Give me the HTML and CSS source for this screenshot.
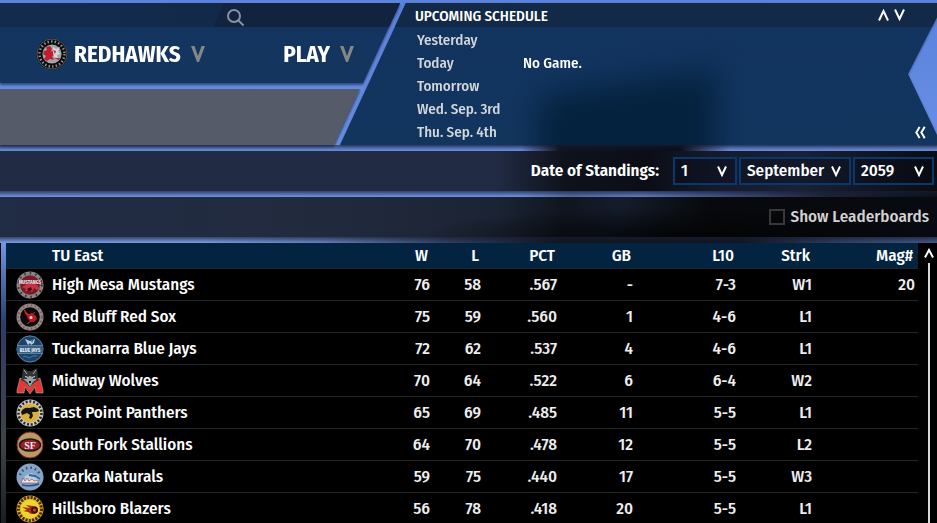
FILE: index.html
```html
<!DOCTYPE html>
<html lang="en">
<head>
<meta charset="utf-8">
<title>Redhawks – Standings</title>
<link rel="stylesheet" href="styles.css">
</head>
<body>
<header class="masthead">
  <div class="masthead-left">
    <nav class="nav-panel">
      <div class="nav-strip">
        <button class="search" aria-label="Search"><svg width="18" height="18" viewBox="0 0 18 18"><circle cx="7" cy="7" r="6"/><path d="M11 11l5.500 5.500"/></svg></button>
      </div>
      <div class="nav-items">
        <a class="nav-link" href="#">
          <svg class="team-logo" width="32" height="32" viewBox="0 0 32 32"><circle cx="16" cy="16" r="15.500" fill="#0c0c0e"/><circle cx="16" cy="16" r="15" fill="none" stroke="#55585b"/><circle cx="16" cy="16" r="12.500" fill="none" stroke="#96989a" stroke-width="2.400" stroke-dasharray="1.400 2.200"/><circle cx="16" cy="16" r="9.600" fill="#a3a6a9"/><path d="M10 9l4-1 2 3-1 2 3 1 1 3-3 1 2 4-4-1-3 2-3-2 2-3-3-2 1-3 3-1z" fill="#c21c31"/><path d="M17 9l3 2 4-2-2 4 2 3-3 1 1 3-4-1-1-4z" fill="#d5d7d9"/><path d="M17 12l3 1-1 3M18 20l6 0-1 2z" fill="#b92337"/></svg>
          <span>REDHAWKS</span>
          <svg class="nav-chevron" width="14" height="16" viewBox="0 0 14 16"><path d="M0 0h3.500L7 10l3.500-10H14L8 16H6z"/></svg>
        </a>
        <a class="nav-link" href="#">
          <span>PLAY</span>
          <svg class="nav-chevron" width="14" height="16" viewBox="0 0 14 16"><path d="M0 0h3.500L7 10l3.500-10H14L8 16H6z"/></svg>
        </a>
      </div>
    </nav>
    <div class="sub-panel"></div>
  </div>
  <section class="schedule">
    <div class="schedule-body">
      <div class="schedule-head">
        <h2>UPCOMING SCHEDULE</h2>
        <div class="schedule-nav">
          <button aria-label="Previous"><svg width="11" height="12" viewBox="0 0 11 12"><path d="M1 11.500L5.500 2L10 11.500"/></svg></button>
          <button aria-label="Next"><svg width="11" height="12" viewBox="0 0 11 12"><path d="M1 .5L5.500 10L10 .5"/></svg></button>
        </div>
      </div>
      <dl class="days">
        <dt>Yesterday</dt><dd></dd>
        <dt>Today</dt><dd>No Game.</dd>
        <dt>Tomorrow</dt><dd></dd>
        <dt>Wed. Sep. 3rd</dt><dd></dd>
        <dt>Thu. Sep. 4th</dt><dd></dd>
      </dl>
      <button class="collapse" aria-label="Collapse"><svg width="11" height="13" viewBox="0 0 11 13"><path d="M4.500 .8Q3 4 1.300 6.500Q3 9 4.500 12.200M9.700 .8Q8 4 6.300 6.500Q8 9 9.700 12.200"/></svg></button>
    </div>
  </section>
</header>
<main>
  <form class="bar bar-date">
    <span class="bar-label">Date of Standings:</span>
    <div class="selects">
      <span class="pick pick-day"><select aria-label="Day"><option>1</option></select><svg width="10" height="11" viewBox="0 0 10 11"><path d="M1 .5L5 9L9 .5"/></svg></span>
      <span class="pick pick-month"><select aria-label="Month"><option>September</option></select><svg width="10" height="11" viewBox="0 0 10 11"><path d="M1 .5L5 9L9 .5"/></svg></span>
      <span class="pick pick-year"><select aria-label="Year"><option>2059</option></select><svg width="10" height="11" viewBox="0 0 10 11"><path d="M1 .5L5 9L9 .5"/></svg></span>
    </div>
  </form>
  <div class="bar bar-options">
    <label class="check"><input type="checkbox"><span>Show Leaderboards</span></label>
  </div>
  <div class="standings">
    <table>
      <colgroup><col class="c-logo"><col><col class="c-w"><col class="c-l"><col class="c-mid"><col class="c-mid"><col class="c-wide"><col class="c-mid"><col class="c-mag"></colgroup>
      <thead><tr><th></th><th class="name">TU East</th><th>W</th><th>L</th><th>PCT</th><th>GB</th><th>L10</th><th>Strk</th><th>Mag#</th></tr></thead>
      <tbody>
        <tr><td><svg class="team-logo" width="28" height="28" viewBox="0 0 28 28"><circle cx="14" cy="14" r="13.500" fill="#858789"/><circle cx="14" cy="14" r="11.800" fill="none" stroke="#43262b" stroke-width="2" stroke-dasharray="1.500 4"/><circle cx="14" cy="14" r="9.800" fill="#7d1926"/><path d="M6 16l5-3 5-1 5 2 3 4-3 1-3-2-2 4-3-2-4 2 1-3z" fill="#c63442"/><path d="M11 18l4-2 1 3-3 1z" fill="#361116"/><path d="M2 9h24v3.500H2z" fill="#7d1926"/><text x="14" y="13" text-anchor="middle" class="logo-text">MUSTANGS</text></svg></td><td class="name">High Mesa Mustangs</td><td>76</td><td>58</td><td>.567</td><td>-</td><td>7-3</td><td>W1</td><td>20</td></tr>
        <tr><td><svg class="team-logo" width="28" height="28" viewBox="0 0 28 28"><circle cx="14" cy="14" r="13.500" fill="#8b8d8e"/><circle cx="14" cy="14" r="11.800" fill="none" stroke="#a3494b" stroke-width="2" stroke-dasharray="1.500 2.500"/><circle cx="14" cy="14" r="9.800" fill="#0b090a"/><path d="M8 6l3 4 2 1 3-1 4 3 1 3-3 3-3 0-3-3-1-3-2-2z" fill="#bd1b22"/><path d="M8 7l4 5M11 21l4-3M17 11l2-2" stroke="#d3331f"/><circle cx="15" cy="14.500" r="1.500" fill="#e8d6cf"/></svg></td><td class="name">Red Bluff Red Sox</td><td>75</td><td>59</td><td>.560</td><td>1</td><td>4-6</td><td>L1</td><td></td></tr>
        <tr><td><svg class="team-logo" width="28" height="28" viewBox="0 0 28 28"><circle cx="14" cy="14" r="13.500" fill="#1c4268"/><circle cx="14" cy="14" r="13" fill="none" stroke="#5c7c99"/><path d="M9 4l5 2 5-2-1 4-3 2-1-2-2 2z" fill="#b8ccd9"/><path d="M15 5l3-1-2 4z" fill="#2d6ca8"/><path d="M1 10.500h26v8H1z" fill="#346185"/><path d="M1 10.500h26M1 18.500h26" stroke="#82a0b6" stroke-width=".6"/><text x="14" y="16.800" text-anchor="middle" class="logo-text">BLUE JAYS</text><path d="M7 22q2-2 4 0t4 0 6-1" fill="none" stroke="#3a83b9"/></svg></td><td class="name">Tuckanarra Blue Jays</td><td>72</td><td>62</td><td>.537</td><td>4</td><td>4-6</td><td>L1</td><td></td></tr>
        <tr><td><svg class="team-logo" width="28" height="28" viewBox="0 0 28 28"><path d="M1 26V23L4 11l4 1 6 9 6-9 4-1 3 12v3h-7l-1-6-5 7-5-7-1 6z" fill="#e13a35" stroke="#bbb" stroke-width=".5"/><path d="M6 11L7 1l5 3h4l5-3 1 10 1 2-4 2-5 5-5-5-4-2z" fill="#303436"/><path d="M8 3l3 4M20 3l-3 4" stroke="#aaa"/><path d="M7 12l4 0 2-3h2l2 3 4 0-4 3-3 5-3-5z" fill="#9ba1a3"/><path d="M9 9.500l3 1M19 9.500l-3 1" stroke="#ddd"/><path d="M13 14h2v2h-2z" fill="#111"/></svg></td><td class="name">Midway Wolves</td><td>70</td><td>64</td><td>.522</td><td>6</td><td>6-4</td><td>W2</td><td></td></tr>
        <tr><td><svg class="team-logo" width="28" height="28" viewBox="0 0 28 28"><circle cx="14" cy="14" r="13.500" fill="#c8c9c4"/><circle cx="14" cy="14" r="11.500" fill="none" stroke="#29292b" stroke-width="2.600" stroke-dasharray="2 1.800"/><circle cx="14" cy="14" r="9.500" fill="#dbb13e"/><path d="M5 13q3-5 8-4l5-1 4 2 1 2-3 1-4 0 1 4-2 3-2-1 1-3-3-2-5 2z" fill="#131416"/></svg></td><td class="name">East Point Panthers</td><td>65</td><td>69</td><td>.485</td><td>11</td><td>5-5</td><td>L1</td><td></td></tr>
        <tr><td><svg class="team-logo" width="28" height="28" viewBox="0 0 28 28"><circle cx="14" cy="14" r="13" fill="#b89a63" stroke="#8d2633"/><ellipse cx="14" cy="14" rx="10.500" ry="6" fill="#941e2a" stroke="#211718" stroke-width="1.500"/><text x="14" y="17.500" text-anchor="middle" class="logo-mono">SF</text></svg></td><td class="name">South Fork Stallions</td><td>64</td><td>70</td><td>.478</td><td>12</td><td>5-5</td><td>L2</td><td></td></tr>
        <tr><td><svg class="team-logo" width="28" height="28" viewBox="0 0 28 28"><circle cx="14" cy="14" r="13.500" fill="#86a5c6"/><path d="M4 12A10.500 10.500 0 0 1 24 12" fill="none" stroke="#294f7c" stroke-width="2.500" stroke-dasharray="1.500 3"/><path d="M9 13l6-3 5 2 4 3-3 4H8z" fill="#b9cde0"/><path d="M13 12l6 1 5 3" stroke="#2a63a0" stroke-width="2" fill="none"/><path d="M5 20l2-5 2 3 2-3 2 3 3-2 2 2 4-1v3z" fill="#e8e5e4" stroke="#9c5157" stroke-width=".7"/><path d="M6 22q8 2 17-1" fill="none" stroke="#285182" stroke-width="1.500"/></svg></td><td class="name">Ozarka Naturals</td><td>59</td><td>75</td><td>.440</td><td>17</td><td>5-5</td><td>W3</td><td></td></tr>
        <tr><td><svg class="team-logo" width="28" height="28" viewBox="0 0 28 28"><circle cx="14" cy="14" r="13.500" fill="#d5b927"/><circle cx="14" cy="14" r="11.500" fill="none" stroke="#5b2117" stroke-width="3" stroke-dasharray="2.200 1.200"/><circle cx="14" cy="14" r="9.500" fill="#ead52e"/><path d="M6 12l8 1-4-3 7 1 4 1 1 4-3 3h-4l-3-2-5-1 4-1z" fill="#a72a1d"/><circle cx="18.500" cy="15" r="3.500" fill="#391713"/><circle cx="18.500" cy="15" r="1.500" fill="#d3442b"/></svg></td><td class="name">Hillsboro Blazers</td><td>56</td><td>78</td><td>.418</td><td>20</td><td>5-5</td><td>L1</td><td></td></tr>
      </tbody>
    </table>
    <div class="scroll">
      <button aria-label="Scroll up"><svg width="10" height="10" viewBox="0 0 10 10"><path d="M1 9.500L5 2L9 9.500"/></svg></button>
      <div class="scroll-thumb"></div>
    </div>
  </div>
</main>
</body>
</html>
```
FILE: styles.css
```css
* { box-sizing: border-box; }
body {
  margin: 0;
  height: 100vh;
  overflow: hidden;
  display: flex;
  flex-direction: column;
  background: #000;
  color: #fff;
  font: 500 17px/20px "Fira Sans Condensed", "Fira Sans", Roboto, sans-serif;
}
button { padding: 0; border: 0; background: none; color: inherit; display: flex; }
h2, dl, dd { margin: 0; }
a { color: inherit; text-decoration: none; }
svg { display: block; flex: none; }

/* Header */
.masthead {
  display: flex;
  padding: 3px 0 6px;
  background:
    linear-gradient(rgba(20, 24, 40, .6), transparent) bottom / 100% 6px no-repeat,
    linear-gradient(90deg, transparent 520px, #10151f 560px, #0b0e16 680px, transparent 730px) bottom / 100% 8px no-repeat,
    linear-gradient(#5b82dc, #6990e4);
}
.masthead-left { flex: none; width: 400px; display: flex; flex-direction: column; gap: 6px; filter: drop-shadow(0 2px 1px rgba(25, 28, 60, .6)); }
.nav-panel { height: 80px; background: linear-gradient(#11335f, #14365e); clip-path: polygon(0 0, 100% 0, 363px 100%, 0 100%); }
.nav-strip { height: 24px; display: flex; justify-content: flex-end; background: linear-gradient(90deg, #132c4d, #112747); }
.search { width: 187px; padding: 6px 0 0 14px; background: #11233f; clip-path: polygon(11px 0, 100% 0, 100% 100%, 0 100%); }
.search svg, .schedule svg, .pick svg, .scroll svg { fill: none; stroke: #fff; stroke-width: 2; }
.search svg { stroke: #8792a2; }
.nav-items { display: flex; align-items: center; justify-content: space-between; height: 54px; padding: 0 46px 0 36px; }
.nav-link { display: flex; align-items: center; gap: 10px; font-size: 23px; font-weight: 700; line-height: 28px; }
.nav-link .team-logo { margin-right: -4px; }
.nav-chevron { fill: #858686; }
.sub-panel { height: 56px; background: #555b69; clip-path: polygon(0 0, 360px 0, 334px 100%, 0 100%); }

.schedule { flex: 1; margin-left: -60px; filter: drop-shadow(0 1px 1px rgba(25, 28, 60, .5)); }
.schedule-body {
  position: relative;
  height: 100%;
  background: linear-gradient(#11335f, #12355e);
  clip-path: polygon(66px 0, 100% 0, 100% 14px, calc(100% - 29px) 71px, 100% 132px, 100% 100%, 0 100%);
}
.schedule-body::before {
  content: "";
  position: absolute;
  left: 198px;
  top: 80px;
  width: 178px;
  height: 120px;
  background: #04213d;
  filter: blur(16px);
  transform: skewY(-8deg);
}
.schedule-head { position: relative; height: 24px; display: flex; align-items: center; justify-content: space-between; padding: 0 32px 0 75px; background: #122947; }
.schedule h2 { font-size: 15px; line-height: 20px; font-weight: 500; padding-top: 2px; }
.schedule-nav { display: flex; gap: 5px; }
.days { position: relative; display: grid; grid-template-columns: 106px 1fr; grid-auto-rows: 23px; align-items: center; padding: 1px 0 0 77px; font-size: 15px; }
.days dt { color: #d3d6da; }
.collapse { position: absolute; right: 11px; bottom: 6px; }

/* Toolbars */
main { flex: 1; min-height: 0; display: flex; flex-direction: column; }
.bar { flex: none; display: flex; align-items: center; justify-content: flex-end; height: 46px; padding-bottom: 6px; }
.bar-date {
  gap: 14px;
  padding-right: 3px;
  background:
    linear-gradient(rgba(25, 29, 48, .7), transparent) bottom / 100% 6px no-repeat,
    linear-gradient(90deg, #6f96e8 520px, #526eac 570px, #6080c8 640px, #4a63a0 690px, #1a2436 830px, #0a0f18) bottom / 100% 6px no-repeat,
    linear-gradient(90deg, #212b44 495px, #0e121b 565px, #0b0e17 650px, #141a2b 710px, #1a2136 800px, #090c13 937px);
}
.bar-label { font-weight: 600; }
.bar-options {
  padding-right: 8px;
  background:
    linear-gradient(rgba(25, 29, 48, .7), transparent) bottom / 100% 6px no-repeat,
    linear-gradient(90deg, #7ba0ec 200px, #6783be 320px, #2f3f5e 450px, #0f141c 560px, #10151f 740px, #33446a 850px, #435888) bottom / 100% 6px no-repeat,
    radial-gradient(260px 30px at 680px 40px, rgba(2, 3, 4, .9), transparent),
    linear-gradient(90deg, #212c45, #222b3e 300px, #1b2334 500px, #10151f 565px, #151c2c 620px, #08090c 710px, #070a10 937px);
}
.selects { display: flex; gap: 2px; }
.pick { display: grid; align-items: center; border: 2px solid #0a386c; background: rgba(6, 8, 16, .3); }
.pick > * { grid-area: 1 / 1; }
.pick svg { justify-self: end; margin-right: 8px; pointer-events: none; }
.pick select { appearance: none; width: 100%; height: 24px; border: 0; border-radius: 0; padding: 0 6px; background: none; color: #fff; font: inherit; }
.pick-day { width: 64px; }
.pick-month { width: 112px; }
.pick-year { width: 81px; }
.check { display: flex; align-items: center; gap: 6px; color: #d3d3d3; }
.check input { appearance: none; width: 16px; height: 16px; margin: 0; border: 2px solid #383838; }

/* Standings */
.standings { flex: 1; min-height: 0; overflow: hidden; display: flex; align-items: stretch; padding-left: 6px; background: linear-gradient(#6f98e8, #283f68 80px, #34415a 130px, #3c4347 200px, #1b1e20) 1px 0 / 5px 100% no-repeat #000; }
table { flex: 1; border-spacing: 0; table-layout: fixed; height: max-content; background: #000; }
.c-logo { width: 46px; }
.c-w { width: 60px; }
.c-l { width: 51px; }
.c-mid { width: 76px; }
.c-wide { width: 103px; }
.c-mag { width: 106px; }
th, td { padding: 0; height: 32px; border-bottom: 1px solid #242424; text-align: right; font-weight: 500; white-space: nowrap; }
th { height: 26px; padding-right: 2px; background: #032441; }
td { color: #eee; }
th:last-child { padding-right: 5px; }
td:last-child { padding-right: 3px; }
th.name, td.name { text-align: left; padding: 0; color: #fff; }
td .team-logo { margin-left: 10px; }
.logo-text { font: 700 5px "Fira Sans Condensed", sans-serif; fill: #e6edf1; }
.logo-mono { font: 700 10px "Liberation Serif", serif; fill: #f0eded; }
.scroll { flex: none; width: 19px; display: flex; flex-direction: column; align-items: center; gap: 5px; padding: 5px 0 0 3px; background: #000; }
.scroll-thumb { width: 2px; flex: 1; background: #d8d8d8; }
```
